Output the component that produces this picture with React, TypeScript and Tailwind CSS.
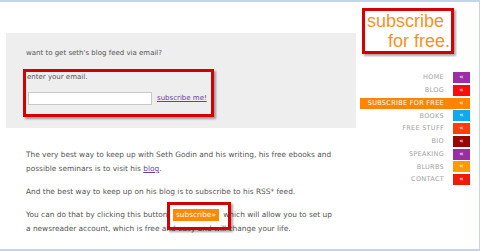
import * as React from "react";

const navItems = [
  { label: "HOME", box: "bg-[#9c2ea6]" },
  { label: "BLOG", box: "bg-[#ff0a0a]" },
  { label: "SUBSCRIBE FOR FREE", box: "bg-[#ff8400]", active: true },
  { label: "BOOKS", box: "bg-[#10a8ee]" },
  { label: "FREE STUFF", box: "bg-[#ff3d0a]" },
  { label: "BIO", box: "bg-[#990606]" },
  { label: "SPEAKING", box: "bg-[#9a2fa4]" },
  { label: "BLURBS", box: "bg-[#ff9a00]" },
  { label: "CONTACT", box: "bg-[#f01a0a]" },
];

const NavRow = ({ label, box, active }: { label: string; box: string; active?: boolean }) => (
  <div
    className={
      "flex h-[11px] items-center justify-end " +
      (active ? "bg-[#ff8400] text-white" : "text-[#a3a3a3]")
    }
  >
    <span className="mr-[9px] text-[6.5px] leading-none tracking-[0.3px]">{label}</span>
    <span className={"flex h-[11px] w-[17px] items-center justify-center text-[7px] leading-none text-white " + box}>
      «
    </span>
  </div>
);

export default function App() {
  return (
    <div
      className="flex h-[251px] w-[480px] overflow-hidden border-t-2 border-r border-b-2 border-[#c3d5eb] bg-white text-[#555]"
      style={{ fontFamily: '"DejaVu Sans", Verdana, sans-serif' }}
    >
      {/* main column */}
      <div className="ml-[6px] w-[350px]">
        <div className="mt-[31px] h-[95px] bg-[#eeeeee] pt-[13px]">
          <p className="ml-[20px] text-[7px] leading-[14px]">want to get seth's blog feed via email?</p>
          <div className="ml-[17px] mt-[9px] w-[191px] border-[3px] border-[#d40000] pb-[9px] shadow-[2px_2px_2px_rgba(0,0,0,0.35)]">
            <p className="pl-[1px] text-[7px] leading-[11px]">enter your email.</p>
            <div className="mt-[9px] flex items-center">
              <input className="ml-[2px] h-[13px] w-[124px] border border-[#c8c8c8] bg-white" />
              <a className="ml-[5px] text-[7px] text-[#6b3fa0] underline">subscribe me!</a>
            </div>
          </div>
        </div>

        <div className="ml-[20px] mt-[20px] text-[7.4px] leading-[14px]">
          <p>
            The very best way to keep up with Seth Godin and his writing, his free ebooks and
            <br />
            possible seminars is to visit his <a className="text-[#6b3fa0] underline">blog</a>.
          </p>
          <p className="mt-[9px]">And the best way to keep up on his blog is to subscribe to his RSS* feed.</p>
          <p className="mt-[9px]">
            You can do that by clicking this button{" "}
            <span className="relative ml-[3px] mr-[2px] inline-block">
              <span className="inline-block bg-[#ff8a00] px-[3px] leading-[12px] text-white">subscribe»</span>
              <span className="absolute -left-[6px] -top-[6px] h-[28px] w-[64px] border-[3px] border-[#d40000] shadow-[2px_2px_2px_rgba(0,0,0,0.35)]" />
            </span>{" "}
            which will allow you to set up
            <br />a newsreader account, which is free and easy and will change your life.
          </p>
        </div>
      </div>

      {/* sidebar */}
      <div className="ml-[4px] w-[110px]">
        <div
          className="ml-[2px] mt-[6px] w-[92px] border-[3px] border-[#d40000] pr-[1px] text-right text-[18px] leading-[20px] text-[#f5922a] shadow-[2px_2px_2px_rgba(0,0,0,0.35)]"
          style={{ fontFamily: '"Liberation Sans", Arial, sans-serif' }}
        >
          <div className="pr-[6px]">subscribe</div>
          <div>for free.</div>
        </div>
        <div className="mt-[18px] flex flex-col gap-[1.75px]">
          {navItems.map((n) => (
            <NavRow key={n.label} {...n} />
          ))}
        </div>
      </div>
    </div>
  );
}
